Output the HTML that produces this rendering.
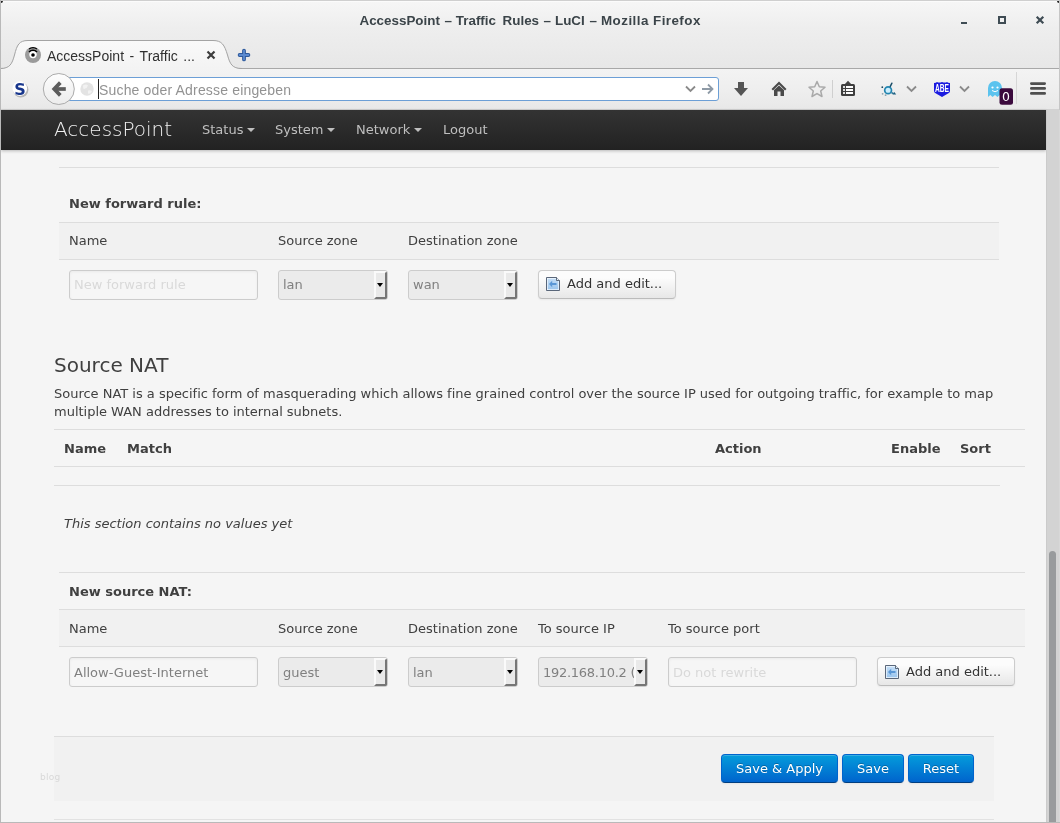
<!DOCTYPE html>
<html lang="en">
<head>
<meta charset="utf-8">
<title>AccessPoint - Traffic Rules - LuCI</title>
<style>
*{box-sizing:border-box;margin:0;padding:0}
html,body{width:1060px;height:823px;overflow:hidden}
body{position:relative;background:#f5f5f5;font-family:"DejaVu Sans","Liberation Sans",sans-serif;font-size:13px;line-height:18px;color:#404040}
.abs{position:absolute}
/* ---------- window chrome ---------- */
#titlebar{left:0;top:0;width:1060px;height:69px;background:linear-gradient(#f6f6f6,#eeeeee 40%,#e7e7e7);border-top:1px solid #cfcfcf}
#title{left:0;top:11px;width:1060px;height:20px;font:bold 13.4px/20px "Liberation Sans",sans-serif;color:#3b4449;white-space:nowrap}
#title span{position:absolute;top:0}
#navrow{left:0;top:69px;width:1060px;height:41px;background:linear-gradient(#f3f3f3,#eeeeee 55%,#e8e8e8);border-bottom:1px solid #d2d2d2}
#sicon{left:12px;top:79px;width:16px;text-align:center;font:bold 16px/22px "DejaVu Sans","Liberation Sans",sans-serif;color:#17358c}
#urltext{left:99px;top:80px;font:14px/20px "Liberation Sans",sans-serif;letter-spacing:.17px;color:#929292;white-space:nowrap}
#tabtext{left:47px;top:46px;font:14px/20px "Liberation Sans",sans-serif;word-spacing:1.7px;color:#303030;white-space:nowrap}
/* ---------- page ---------- */
#hdr{left:1px;top:110px;width:1045px;height:40px;background:linear-gradient(#333,#222);box-shadow:0 1px 3px rgba(0,0,0,.25)}
#brand{left:54px;top:119px;font-size:20px;line-height:20px;font-weight:200;color:#f0f0f0;white-space:nowrap}
.nav{top:121px;color:#bfbfbf;white-space:nowrap}
.caret{display:inline-block;width:0;height:0;border-left:4px solid transparent;border-right:4px solid transparent;border-top:4px solid #bfbfbf;margin-left:3.5px;vertical-align:middle;position:relative;top:-1px}
.hl{height:1px;background:#ddd}
.rowbg{background:#f1f1f1}
.t{white-space:nowrap;margin-top:1px}
.b{font-weight:bold}
.inp{height:30px;border:1px solid #ccc;border-radius:3px;background:#f6f6f6;box-shadow:inset 0 1px 3px rgba(0,0,0,.05);color:#808080;padding:5px 4px;white-space:nowrap;overflow:hidden}
.ph{color:#d9d9d9}
.sel{height:30px;border:1px solid #ccc;border-radius:3px;background:#ebebeb;color:#808080;padding:5px 0 5px 4px;white-space:nowrap;overflow:hidden}
.sel i{position:absolute;right:0;top:0;width:13px;height:28px;background:#e9e9e9;border-left:2px solid #fafafa;border-top:2px solid #fafafa;border-right:2px solid #767676;border-bottom:2px solid #767676}
.sel i:after{content:"";position:absolute;left:1px;top:10px;border-left:3.5px solid transparent;border-right:3.5px solid transparent;border-top:4px solid #000}
.btn{height:29px;border:1px solid #ccc;border-bottom-color:#bbb;border-radius:4px;background:linear-gradient(#fcfcfc,#fcfcfc 25%,#e7e7e7);color:#333;text-shadow:0 1px 1px rgba(255,255,255,.75);box-shadow:inset 0 1px 0 rgba(255,255,255,.2),0 1px 2px rgba(0,0,0,.05);white-space:nowrap;padding:4px 0 0 28px}
.ico{position:absolute;left:7px;top:6px}
.r2{padding-top:6px}
.r2b{padding-top:5px}
.r2b .ico{top:7px}
.pbtn{height:29px;border:1px solid #0064cd;border-color:#0064cd #0064cd #003f81;border-radius:4px;background:linear-gradient(#049cdb,#0064cd);color:#fff;text-shadow:0 -1px 0 rgba(0,0,0,.25);white-space:nowrap;text-align:center;padding-top:5px;box-shadow:inset 0 1px 0 rgba(255,255,255,.2),0 1px 2px rgba(0,0,0,.05)}
</style>
</head>
<body><div id="wrap" style="position:absolute;left:0;top:0;width:1060px;height:823px;will-change:transform">
<!-- window chrome -->
<div class="abs" id="titlebar"></div>
<div class="abs" id="navrow"></div>
<svg class="abs" style="left:0;top:0" width="1060" height="110" viewBox="0 0 1060 110">
  <defs><linearGradient id="TG" x1="0" y1="0" x2="0" y2="1"><stop offset="0" stop-color="#f9f9f9"/><stop offset="1" stop-color="#f3f3f3"/></linearGradient></defs>
  <!-- tab strip base line + active tab -->
  <path d="M0,68.5 H1060" stroke="#a8a8a8" stroke-width="1" fill="none"/>
  <path d="M0,69 C10,68.500 12,64 14.500,55 C17,45 19,40.500 28,40.500 L213,40.500 C222,40.500 224.500,45 227.500,55 C230,64 232,68.500 242,69 Z" fill="url(#TG)"/>
  <path d="M0,68.500 C10,68.500 12,64 14.500,55 C17,45 19,40.500 28,40.500 L213,40.500 C222,40.500 224.500,45 227.500,55 C230,64 232,68.500 242,68.500" fill="none" stroke="#a3a3a3" stroke-width="1"/>
  <!-- favicon -->
  <circle cx="33" cy="55" r="8" fill="#9b9b9b"/>
  <circle cx="33" cy="54.500" r="3.700" fill="#fff"/>
  <circle cx="33" cy="55" r="1.800" fill="#000"/>
  <path d="M29,52 A5.500,5.500 0 0 1 37,52" fill="none" stroke="#000" stroke-width="1.600"/>
  <path d="M29,49 A7,7 0 0 1 37,49" fill="none" stroke="#000" stroke-width="1.200"/>
  <!-- tab close -->
  <path d="M207.500,51.500 L214.500,58.500 M214.500,51.500 L207.500,58.500" stroke="#3d3d3d" stroke-width="2.200" fill="none"/>
  <!-- new tab plus -->
  <path d="M244,50.600 V59.400 M239.600,55 H248.400" stroke="#2f5a9c" stroke-width="3.800" stroke-linecap="round" fill="none"/>
  <path d="M244,50.600 V59.400 M239.600,55 H248.400" stroke="#5b8ad0" stroke-width="1.800" stroke-linecap="round" fill="none"/>
  <!-- window buttons -->
  <rect x="961" y="22" width="6" height="2" fill="#3f4c54"/>
  <rect x="999" y="17" width="6" height="6" fill="none" stroke="#3f4c54" stroke-width="2"/>
  <path d="M1036.700,16.700 L1043.300,23.300 M1043.300,16.700 L1036.700,23.300" stroke="#3f4c54" stroke-width="2.200" fill="none"/>
  <!-- S icon -->
  <circle cx="20.800" cy="89.800" r="7.600" fill="#b8b8b8"/>
  <circle cx="19.800" cy="88.600" r="7.300" fill="#fff"/>
  <!-- back button -->
  <rect x="66.500" y="77.500" width="652" height="23" rx="2.500" fill="#fff" stroke="#6c9fd6"/>
  <defs><linearGradient id="BG" x1="0" y1="0" x2="0" y2="1"><stop offset="0" stop-color="#fdfdfd"/><stop offset="1" stop-color="#ececec"/></linearGradient></defs><circle cx="58.800" cy="89" r="15.500" fill="url(#BG)" stroke="#ababab"/>
  <path d="M60.300,82.600 L54.200,89 L60.300,95.400" fill="none" stroke="#5c5c5c" stroke-width="3.700" stroke-linejoin="miter"/><path d="M55,89 H65.800" stroke="#5c5c5c" stroke-width="3.700" fill="none"/>
  <!-- globe -->
  <circle cx="87" cy="89" r="6.700" fill="#e3e3e3"/>
  <path d="M83,85.500 q3,-2 5,0 q-1,3 -3,3 q-2,2 -2,-3 z M88,90.500 q3,-1 4,1 q-2,3 -4,2 z" fill="#f2f2f2"/>
  <!-- caret -->
  <rect x="98" y="79" width="1" height="20" fill="#222"/>
  <!-- url dropdown + go -->
  <path d="M686,86.500 L690.500,91 L695,86.500" stroke="#8a8a8a" stroke-width="1.800" fill="none"/>
  <path d="M702,89 H712 M708,84.500 L712.500,89 L708,93.500" stroke="#8e9aa6" stroke-width="1.800" fill="none"/>
  <!-- download -->
  <path d="M738,82 H744 V88 H748 L741,96 L734,88 H738 Z" fill="#555"/>
  <!-- home -->
  <path d="M779,81.500 L771.500,89 L773,90.500 L779,84.500 L785,90.500 L786.500,89 Z" fill="#4a4a4a"/>
  <path d="M774,90 L779,85.500 L784,90 V96 H780.500 V91.500 H777.500 V96 H774 Z" fill="#4a4a4a"/>
  <!-- star -->
  <path d="M817,81.500 L819.300,86.700 L825,87.300 L820.700,91 L822,96.500 L817,93.600 L812,96.500 L813.300,91 L809,87.300 L814.700,86.700 Z" fill="none" stroke="#a9a9a9" stroke-width="1.500" stroke-linejoin="round"/>
  <rect x="832" y="80" width="1" height="18" fill="#cfcfcf"/>
  <!-- bookmarks list -->
  <path d="M844.500,84.500 L848,80.800 L851.500,84.500 Z" fill="#424242"/>
  <rect x="841" y="84" width="14" height="12" rx="1.500" fill="#3e3e3e"/>
  <path d="M843,86 h2 v2 h-2 z M843,89 h2 v2 h-2 z M843,92 h2 v2 h-2 z" fill="#dedede"/>
  <path d="M846,86 h7 v2 h-7 z M846,89 h7 v2 h-7 z M846,92 h7 v2 h-7 z" fill="#fdfdfd"/>
  <!-- addon 1 -->
  <circle cx="888.100" cy="90.200" r="3.400" fill="#cdeefd" stroke="#2285b0" stroke-width="1.700"/>
  <path d="M890.300,86.400 L891.900,83.200" stroke="#1c4f6a" stroke-width="1.500" stroke-linecap="round"/>
  <circle cx="882.300" cy="87.200" r="0.900" fill="#1f4c63"/>
  <circle cx="882.600" cy="93.800" r="0.900" fill="#8aa4ae"/>
  <circle cx="885.600" cy="95.200" r="0.900" fill="#8aa4ae"/>
  <path d="M891.500,92.600 L893.500,93.600" stroke="#1f6f94" stroke-width="1.600"/>
  <path d="M892.500,94.600 L894.300,92 L896.200,94.600 Z" fill="#1b5f80"/>
  <path d="M907,86.500 L911.500,91 L916,86.500" stroke="#8a8a8a" stroke-width="1.800" fill="none"/>
  <!-- ABE shield -->
  <path d="M934,83 q2,0 3,-1 q2,1.200 5,0 q3,1.200 5,0 q1,1 3,1 v8 q0,1.500 -2,2.500 l-6,3.500 l-6,-3.500 q-2,-1 -2,-2.500 z" fill="#1b1be0"/>
  <text x="942" y="91.700" text-anchor="middle" font-family="Liberation Sans, sans-serif" font-size="10" font-weight="bold" fill="#fff" textLength="14" lengthAdjust="spacingAndGlyphs">ABE</text>
  <path d="M960,86.500 L964.500,91 L969,86.500" stroke="#8a8a8a" stroke-width="1.800" fill="none"/>
  <!-- ghost -->
  <path d="M988,97 V88 a7,7 0 0 1 14,0 V97 l-2.300,-2 l-2.300,2 l-2.400,-2 l-2.400,2 l-2.300,-2 z" fill="#5cc3ee"/>
  <circle cx="992.500" cy="87.500" r="1.100" fill="#fff"/><circle cx="997.500" cy="87.500" r="1.100" fill="#fff"/>
  <path d="M992,90.500 q3,2.500 6,0" stroke="#fff" stroke-width="1" fill="none"/>
  <rect x="999.500" y="88.300" width="13.500" height="16.400" rx="2.500" fill="#3b0a3d"/>
  <text x="1006" y="101.300" text-anchor="middle" font-family="DejaVu Sans, Liberation Sans, sans-serif" font-size="12.500" fill="#fff">0</text>
  <rect x="1016" y="72" width="1" height="32" fill="#d6d6d6"/>
  <!-- hamburger -->
  <rect x="1030" y="82.200" width="16" height="2.700" rx="1.350" fill="#4f4f4f"/>
  <rect x="1030" y="87.100" width="16" height="2.700" rx="1.350" fill="#4f4f4f"/>
  <rect x="1030" y="92.100" width="16" height="2.700" rx="1.350" fill="#4f4f4f"/>
</svg>
<div class="abs" id="title"><span style="left:359.5px">AccessPoint</span> <span style="left:444.4px">–</span> <span style="left:455.8px">Traffic</span> <span style="left:502.6px">Rules</span> <span style="left:543.4px">–</span> <span style="left:555px">LuCI</span> <span style="left:589.6px">–</span> <span style="left:601px;letter-spacing:.45px">Mozilla</span> <span style="left:653px;letter-spacing:.45px">Firefox</span></div>
<div class="abs" id="urltext">Suche oder Adresse eingeben</div>
<div class="abs" id="tabtext">AccessPoint - Traffic ...</div>
<div class="abs" id="sicon">S</div>

<!-- page header -->
<div class="abs" id="hdr"></div>
<div class="abs" id="brand">AccessPoint</div>
<div class="abs nav" style="left:202px">Status<span class="caret"></span></div>
<div class="abs nav" style="left:275px">System<span class="caret"></span></div>
<div class="abs nav" style="left:356px">Network<span class="caret"></span></div>
<div class="abs nav" style="left:443px">Logout</div>

<!-- forward rule section -->
<div class="abs hl" style="left:59px;top:167px;width:940px"></div>
<div class="abs t b" style="left:69px;top:194px">New forward rule:</div>
<div class="abs rowbg" style="left:59px;top:222px;width:940px;height:38px"></div>
<div class="abs hl" style="left:59px;top:222px;width:940px"></div>
<div class="abs hl" style="left:59px;top:259px;width:940px"></div>
<div class="abs t" style="left:69px;top:231px">Name</div>
<div class="abs t" style="left:278px;top:231px">Source zone</div>
<div class="abs t" style="left:408px;top:231px">Destination zone</div>
<div class="abs inp ph" style="left:69px;top:270px;width:189px">New forward rule</div>
<div class="abs sel" style="left:278px;top:270px;width:110px">lan<i></i></div>
<div class="abs sel" style="left:408px;top:270px;width:110px">wan<i></i></div>
<div class="abs btn" style="left:538px;top:270px;width:138px"><svg class="ico" width="14" height="14" viewBox="0 0 14 14"><defs><linearGradient id="G" x1="0" y1="0" x2="0" y2="1"><stop offset="0" stop-color="#c3ddf6"/><stop offset="1" stop-color="#9cc6ee"/></linearGradient></defs><path d="M0.500,0.500 H10.500 L13.500,3.500 V13.500 H0.500 Z" fill="#f2f8fe" stroke="#47566b" stroke-width="0.900"/><path d="M1.700,1.700 H10 L12.300,4 V12.300 H1.700 Z" fill="url(#G)"/><path d="M10.500,0.500 V3.500 H13.500" fill="#e8f1fb" stroke="#3b4a5e" stroke-width="0.800"/><path d="M3,7 L6.200,3.800 L6.200,6 L10.500,6 L10.500,8 L6.200,8 L6.200,10.200 Z" fill="#5a97d6"/></svg>Add and edit...</div>

<!-- Source NAT -->
<div class="abs t" style="left:54px;top:352px;font-size:20px;line-height:24px">Source NAT</div>
<div class="abs" style="left:54px;top:385px;width:960px;letter-spacing:-0.012px">Source NAT is a specific form of masquerading which allows fine grained control over the source IP used for outgoing traffic, for example to map multiple WAN addresses to internal subnets.</div>
<div class="abs hl" style="left:54px;top:429px;width:971px"></div>
<div class="abs hl" style="left:54px;top:466px;width:971px"></div>
<div class="abs hl" style="left:54px;top:485px;width:946px"></div>
<div class="abs t b" style="left:64px;top:439px">Name</div>
<div class="abs t b" style="left:127px;top:439px">Match</div>
<div class="abs t b" style="left:715px;top:439px">Action</div>
<div class="abs t b" style="left:891px;top:439px">Enable</div>
<div class="abs t b" style="left:960px;top:439px">Sort</div>
<div class="abs t" style="left:64px;top:514px;font-style:italic">This section contains no values yet</div>

<div class="abs hl" style="left:59px;top:572px;width:966px"></div>
<div class="abs t b" style="left:69px;top:582px">New source NAT:</div>
<div class="abs rowbg" style="left:59px;top:609px;width:966px;height:38px"></div>
<div class="abs hl" style="left:59px;top:609px;width:966px"></div>
<div class="abs hl" style="left:59px;top:646px;width:966px"></div>
<div class="abs t" style="left:69px;top:619px">Name</div>
<div class="abs t" style="left:278px;top:619px">Source zone</div>
<div class="abs t" style="left:408px;top:619px">Destination zone</div>
<div class="abs t" style="left:538px;top:619px">To source IP</div>
<div class="abs t" style="left:668px;top:619px">To source port</div>
<div class="abs inp r2" style="left:69px;top:657px;width:189px">Allow-Guest-Internet</div>
<div class="abs sel r2" style="left:278px;top:657px;width:110px">guest<i></i></div>
<div class="abs sel r2" style="left:408px;top:657px;width:110px">lan<i></i></div>
<div class="abs sel r2" style="left:538px;top:657px;width:110px;letter-spacing:-0.27px">192.168.10.2 (<i></i></div>
<div class="abs inp ph r2" style="left:668px;top:657px;width:189px">Do not rewrite</div>
<div class="abs btn r2b" style="left:877px;top:657px;width:138px"><svg class="ico" width="14" height="14" viewBox="0 0 14 14"><path d="M0.500,0.500 H10.500 L13.500,3.500 V13.500 H0.500 Z" fill="#f2f8fe" stroke="#47566b" stroke-width="0.900"/><path d="M1.700,1.700 H10 L12.300,4 V12.300 H1.700 Z" fill="url(#G)"/><path d="M10.500,0.500 V3.500 H13.500" fill="#e8f1fb" stroke="#3b4a5e" stroke-width="0.800"/><path d="M3,7 L6.200,3.800 L6.200,6 L10.500,6 L10.500,8 L6.200,8 L6.200,10.200 Z" fill="#5a97d6"/></svg>Add and edit...</div>

<!-- page actions -->
<div class="abs rowbg" style="left:54px;top:736px;width:940px;height:65px"></div>
<div class="abs hl" style="left:54px;top:736px;width:940px"></div>
<div class="abs pbtn" style="left:721px;top:754px;width:117px">Save &amp; Apply</div>
<div class="abs pbtn" style="left:842px;top:754px;width:62px">Save</div>
<div class="abs pbtn" style="left:908px;top:754px;width:66px">Reset</div>
<div class="abs hl" style="left:54px;top:819px;width:940px;background:#e2e2e2"></div>
<div class="abs t" style="left:40px;top:767px;font-size:9px;letter-spacing:.3px;color:#d8d8d8">blog</div>

<!-- scrollbar + window border -->
<div class="abs" style="left:1px;top:1px;width:1058px;height:1px;background:#fbfbfb"></div>
<div class="abs" style="left:1046px;top:110px;width:13px;height:712px;background:#d3d3d3;border-left:1px solid #cbcbcb"></div>
<div class="abs" style="left:1049px;top:551px;width:7px;height:275px;background:#999b9d;border-radius:4px"></div>
<div class="abs" style="left:0;top:0;width:1px;height:823px;background:#b9b9b9"></div>
<div class="abs" style="left:1059px;top:0;width:1px;height:823px;background:linear-gradient(#c6c6c6,#c6c6c6 110px,#d8d8d8 110px)"></div>
<div class="abs" style="left:1px;top:1px;width:2px;height:2px;background:#222;border-radius:0 0 2px 0"></div>
<div class="abs" style="left:1057px;top:1px;width:2px;height:2px;background:#222;border-radius:0 0 0 2px"></div>
<div class="abs" style="left:0;top:822px;width:1060px;height:1px;background:#b9b9b9"></div>
</div></body>
</html>
